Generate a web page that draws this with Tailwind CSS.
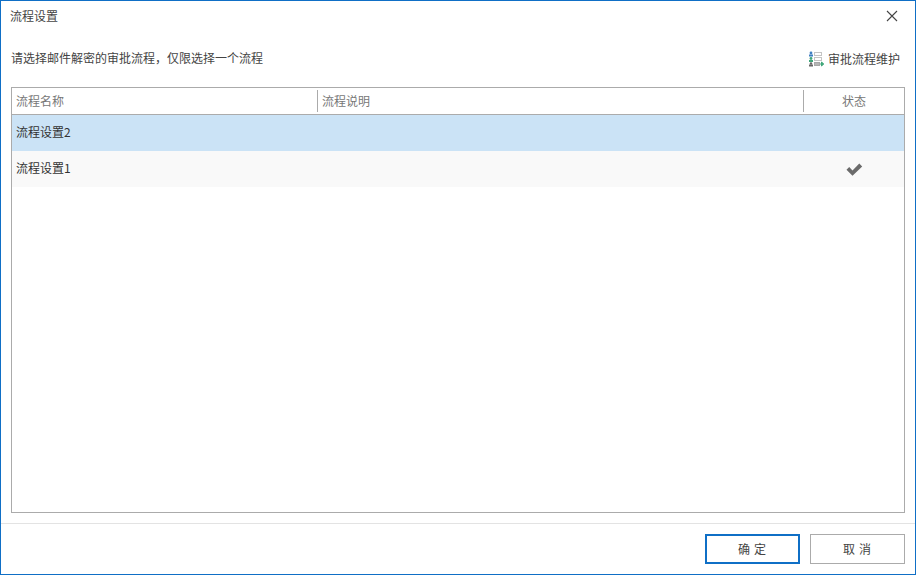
<!DOCTYPE html>
<html lang="zh-CN">
<head>
<meta charset="utf-8">
<script src="https://cdn.jsdelivr.net/npm/@tailwindcss/browser@4"></script>
</head>
<body class="m-0 bg-white">
<div class="w-[916px] h-[575px] box-border border border-[#0f6fc6] bg-white flex flex-col overflow-hidden text-[12px] text-[#444444] font-['Noto_Sans_CJK_SC','Noto_Sans',sans-serif]">
  <div class="h-[30px] shrink-0 flex items-center justify-between pl-[9px] pr-[17px]">
    <span class="leading-none">流程设置</span>
    <svg width="12" height="12" viewBox="0 0 12 12" class="block"><path d="M1 1 L11 11 M11 1 L1 11" stroke="#444444" stroke-width="1.1" fill="none"/></svg>
  </div>
  <div class="h-[56px] shrink-0 flex items-start justify-between pl-[10px] pr-[15px] pt-[19px]">
    <span class="leading-[16px]">请选择邮件解密的审批流程，仅限选择一个流程</span>
    <div class="flex items-center gap-[4px] h-[16px] mt-[1px]">
      <svg width="16" height="16" viewBox="0 0 16 16" class="block">
        <circle cx="3" cy="2" r="1.4" fill="#3f7fc1"/><rect x="1" y="3.5" width="4" height="2" fill="#3f7fc1"/>
        <circle cx="3" cy="7.5" r="1.4" fill="#3fa67a"/><rect x="1" y="9" width="4" height="2" fill="#3fa67a"/>
        <circle cx="3" cy="12.5" r="1.2" fill="#666666"/><rect x="1" y="13.5" width="4" height="2" fill="#666666"/>
        <rect x="6.5" y="1.5" width="7" height="3" fill="#fff" stroke="#c4c4c4"/>
        <rect x="6.5" y="6.5" width="7" height="3" fill="#fff" stroke="#c4c4c4"/>
        <rect x="6.5" y="11.5" width="5" height="3" fill="#b5b5b5" stroke="#a8a8a8"/>
        <path d="M12 13 H14 M13.5 11 L15.8 13 L13.5 15 Z" stroke="#3fa67a" fill="#3fa67a" stroke-width="1"/>
      </svg>
      <span class="leading-[16px]">审批流程维护</span>
    </div>
  </div>
  <div class="mx-[10px] w-[894px] h-[426px] shrink-0 box-border border border-[#ababab] flex flex-col">
    <div class="h-[27px] shrink-0 box-border border-b border-[#ababab] flex text-[#777777]">
      <div class="w-[306px] flex items-center pl-[4px] my-[2px] border-r border-[#ababab]">流程名称</div>
      <div class="w-[486px] flex items-center pl-[4px] my-[2px] border-r border-[#ababab]">流程说明</div>
      <div class="flex-1 flex items-center justify-center my-[2px]">状态</div>
    </div>
    <div class="h-[36px] shrink-0 bg-[#cbe3f6] flex items-center pl-[4px] pb-[2px] text-[#333333]">流程设置2</div>
    <div class="h-[36px] shrink-0 bg-[#f9f9f9] flex items-center text-[#333333]">
      <div class="w-[792px] pl-[4px] pb-[2px] box-border">流程设置1</div>
      <div class="flex-1 flex justify-center pl-[1px]">
        <svg width="17" height="13" viewBox="0 0 17 13" class="block"><path d="M0.5 6.8 L3.2 4.1 L6.5 7.4 L13.3 0.6 L16.2 3.4 L6.5 12.8 Z" fill="#6b6b6b"/></svg>
      </div>
    </div>
  </div>
  <div class="mt-[10px] h-px shrink-0 bg-[#e3e3e3]"></div>
  <div class="flex-1 flex justify-end items-start gap-[10px] pt-[10px] pr-[10px]">
    <button class="w-[95px] h-[30px] box-border border-2 border-[#0f6fc6] bg-white text-[#444444] tracking-[4px] indent-[3px] leading-none">确定</button>
    <button class="w-[95px] h-[30px] box-border border border-[#ababab] bg-white text-[#444444] tracking-[4px] indent-[3px] leading-none">取消</button>
  </div>
</div>
</body>
</html>
